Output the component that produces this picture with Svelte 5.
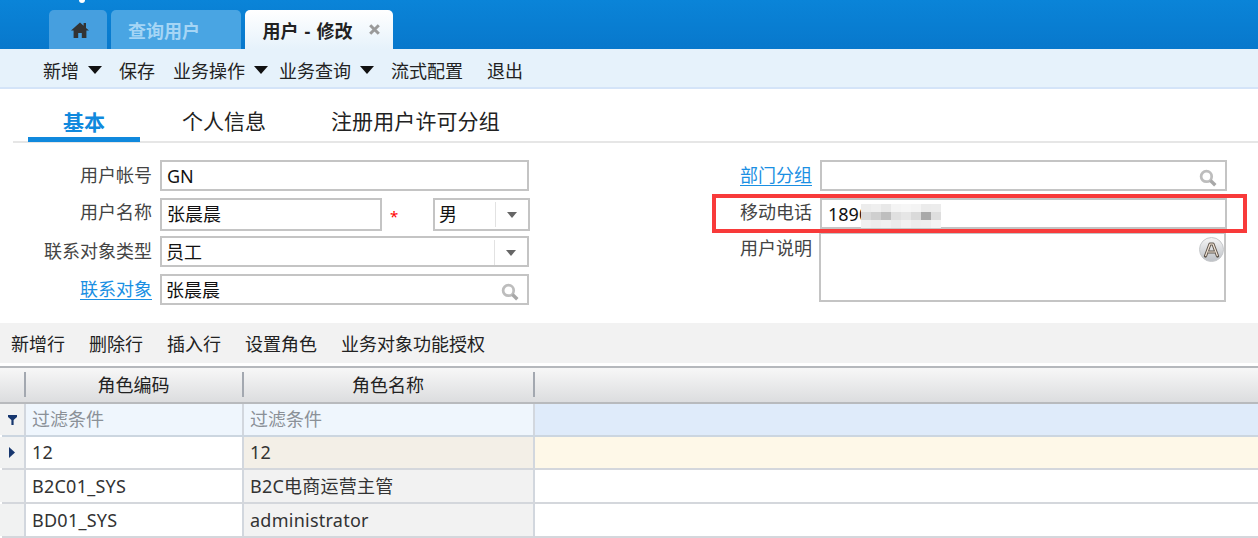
<script>
  const mosaic = [
    ['#ececec','#efefef','#e8e8e8','#f4f4f4','#f6f6f6','#f4f4f4','#ebebeb','#ececec'],
    ['#d9d9d9','#cfcfcf','#bebebe','#e0e0e0','#e6e6e6','#dadada','#a9a9a9','#dedede'],
    ['#f0f0f0','#ededed','#f0f0f0','#ebebeb','#f2f2f2','#ededed','#eeeeee','#f4f4f4']
  ];
  const rows = [
    { code: '12', name: '12', current: true },
    { code: 'B2C01_SYS', name: 'B2C电商运营主管' },
    { code: 'BD01_SYS', name: 'administrator' }
  ];
</script>

<div class="page">
  <header class="topbar">
    <span class="dot"></span>
    <div class="tab home">
      <svg width="18" height="16" viewBox="0 0 18 16"><path d="M9 .5 0 8.6h2.6V16h4.6v-5h3.6v5h4.6V8.6H18L15 5.9V1h-2.4v2.7z" fill="#333"/></svg>
    </div>
    <div class="tab inactive">查询用户</div>
    <div class="tab active">
      <span class="title">用户 - 修改</span>
      <svg class="close" width="11" height="11" viewBox="0 0 11 11"><path d="M1.2 1.2l8.6 8.6M9.8 1.2l-8.6 8.6" stroke="#9a9a9a" stroke-width="3"/></svg>
    </div>
  </header>

  <nav class="toolbar">
    <span class="tool">新增<i class="caret"></i></span>
    <span class="tool s">保存</span>
    <span class="tool b">业务操作<i class="caret"></i></span>
    <span class="tool c">业务查询<i class="caret"></i></span>
    <span class="tool d">流式配置</span>
    <span class="tool e">退出</span>
  </nav>

  <div class="subtabs">
    <span class="subtab on">基本</span>
    <span class="subtab two">个人信息</span>
    <span class="subtab three">注册用户许可分组</span>
  </div>

  <section class="form">
    <div class="col left">
      <div class="row r1"><span class="label">用户帐号</span><div class="field grow gn">GN</div></div>
      <div class="row r2">
        <span class="label">用户名称</span>
        <div class="field name">张晨晨</div>
        <span class="req">*</span>
        <div class="field sex"><span class="val">男</span><span class="drop"><i></i></span></div>
      </div>
      <div class="row r3"><span class="label">联系对象类型</span><div class="field grow"><span class="val">员工</span><span class="drop"><i></i></span></div></div>
      <div class="row r4">
        <a class="label link">联系对象</a>
        <div class="field grow"><span class="val">张晨晨</span>
          <svg class="search" width="18" height="18" viewBox="0 0 17 17"><circle cx="7" cy="7" r="5" fill="none" stroke="#bdbdbd" stroke-width="2.6"/><path d="m10.8 10.8 4.6 4.6" stroke="#a8a8a8" stroke-width="3.2"/></svg>
        </div>
      </div>
    </div>
    <div class="col right">
      <div class="row r1">
        <a class="label link">部门分组</a>
        <div class="field grow"><span class="val"></span>
          <svg class="search" width="18" height="18" viewBox="0 0 17 17"><circle cx="7" cy="7" r="5" fill="none" stroke="#bdbdbd" stroke-width="2.6"/><path d="m10.8 10.8 4.6 4.6" stroke="#a8a8a8" stroke-width="3.2"/></svg>
        </div>
      </div>
      <div class="row r2 phone">
        <span class="label">移动电话</span>
        <div class="field grow latin"><span class="val">1890</span>
          <div class="mosaic">
            {#each mosaic as line}
              {#each line as c}<span style="background:{c}"></span>{/each}
            {/each}
          </div>
        </div>
        <div class="redbox"></div>
      </div>
      <div class="row r3 note">
        <span class="label">用户说明</span>
        <div class="area">
          <svg class="abc" width="25" height="25" viewBox="0 0 25 25"><defs><linearGradient id="g" x1="0" y1="0" x2="0" y2="1"><stop offset="0" stop-color="#f6f6f6"/><stop offset="1" stop-color="#bcc0c6"/></linearGradient></defs><circle cx="12.5" cy="12.5" r="12" fill="url(#g)" stroke="#c6c8ca"/><path d="M6.5 19 11 7h3l4.500 12M9 15h7" fill="none" stroke="#5f564d" stroke-width="3.2" stroke-linejoin="round" stroke-linecap="round"/><path d="M6.500 19 11 7h3l4.500 12M9 15h7" fill="none" stroke="#f4e6d8" stroke-width="1.2" stroke-linejoin="round"/></svg>
        </div>
      </div>
    </div>
  </section>

  <div class="gridbar">
    <span>新增行</span><span>删除行</span><span>插入行</span><span>设置角色</span><span>业务对象功能授权</span>
  </div>

  <section class="grid">
    <div class="ghead">
      <div class="c0"></div>
      <div class="c1">角色编码</div>
      <div class="c2">角色名称</div>
      <div class="c3"></div>
    </div>
    <div class="gfilter">
      <div class="c0"><svg width="9" height="10" viewBox="0 0 9 10"><path d="M0 0h9v2L5.6 5v5H3.4V5L0 2z" fill="#17376f"/></svg></div>
      <div class="c1">过滤条件</div>
      <div class="c2">过滤条件</div>
      <div class="c3"></div>
    </div>
    {#each rows as r}
      <div class="grow-row" class:current={r.current}>
        <div class="c0">{#if r.current}<svg width="6" height="11" viewBox="0 0 6 11"><path d="M0 0l6 5.5L0 11z" fill="#17376f"/></svg>{/if}</div>
        <div class="c1">{r.code}</div>
        <div class="c2">{r.name}</div>
        <div class="c3"></div>
      </div>
    {/each}
  </section>
</div>

<style>
  :global(body) { margin: 0; background: #fff; }
  .page {
    width: 1258px; height: 538px; overflow: hidden;
    font-family: "Noto Sans", "Noto Sans CJK SC", sans-serif;
    font-size: 18px; color: #222;
  }
  .topbar {
    height: 49px; box-sizing: border-box; padding: 10px 0 0 49px;
    display: flex; gap: 4px; position: relative;
    background: linear-gradient(#0a84d8, #0878cc);
  }
  .dot { position: absolute; left: 79px; top: -3px; width: 6px; height: 6px; border-radius: 50%; background: #fff; }
  .tab {
    height: 39px; box-sizing: border-box; border-radius: 5px 5px 0 0;
    display: flex; align-items: center; justify-content: center;
    font-weight: 700; font-size: 18px;
  }
  .home { width: 58px; background: #469fdf; padding-left: 4px; }
  .inactive { width: 130px; background: #49a5e3; color: #a5d5f5; padding-right: 24px; }
  .active { width: 148px; background: linear-gradient(#fff, #e6f2fb); color: #222; gap: 16px; padding-left: 4px; white-space: pre; }
  .title { word-spacing: 1.5px; }

  .toolbar {
    height: 40px; box-sizing: border-box; display: flex; align-items: center;
    padding: 4px 0 0 43px; background: #e6f2fb; border-bottom: 2px solid #d4e4f8; color: #222;
    font-size: 18px;
  }
  .tool { display: inline-flex; align-items: center; white-space: nowrap; margin-right: 17px; }
  .tool.s { margin-right: 18px; }
  .tool.b { margin-right: 11px; }
  .tool.c { margin-right: 17px; }
  .tool.d { margin-right: 24px; }
  .caret {
    display: inline-block; margin-left: 9px;
    border: 7px solid transparent; border-top: 8px solid #111; border-bottom: 0;
  }

  .subtabs {
    margin: 0 0 0 13px; height: 54px; box-sizing: border-box; display: flex; align-items: flex-end;
    border-bottom: 2px solid #e6e6e6; font-size: 21px; padding-left: 15px;
  }
  .subtab { display: block; line-height: 34px; height: 37px; box-sizing: border-box; white-space: nowrap; }
  .subtab.on { width: 112px; text-align: center; color: #1089dd; font-weight: 700; border-bottom: 5px solid #1089dd; margin-bottom: -1px; }
  .subtab.two { margin-left: 42px; }
  .subtab.three { margin-left: 65px; letter-spacing: .1px; }

  .form { display: grid; grid-template-columns: 530px 514px; column-gap: 183px; padding: 17px 0 0 0; height: 180px; box-sizing: border-box; }
  .col { display: flex; flex-direction: column; }
  .row { display: flex; align-items: flex-start; position: relative; }
  .label { width: 152px; flex: none; text-align: right; color: #444; font-size: 18px; line-height: 31px; margin-right: 8px; white-space: nowrap; }
  .right .label { width: 99px; }
  .link { color: #1a8fe3; text-decoration: underline; text-underline-offset: 3px; }
  .field {
    height: 31px; box-sizing: border-box; border: 2px solid #c4c4c4; background: #fff;
    display: flex; align-items: center; color: #111; position: relative; line-height: 31px; padding-top: 2px;
  }
  .field.grow { flex: 1; padding-left: 4px; }
  .left .field.grow { margin-right: 1px; }
  .field.latin { padding-left: 6px; }
  .field.gn { padding-left: 5px; }
  .val { flex: 1; }
  .r1, .r2, .r3 { height: 38px; }
  .r4 { height: 31px; }
  .left .r2 .field { height: 33px; padding-top: 0; }
  .left .r2 .label { line-height: 28px; }
  .field.name { width: 222px; flex: none; padding-left: 5px; }
  .req { width: 51px; flex: none; color: #f00; padding-left: 8px; box-sizing: border-box; line-height: 36px; font-size: 15px; }
  .field.sex { width: 97px; flex: none; padding-left: 4px; }
  .drop { width: 32px; height: 25px; border-left: 1px solid #e2e2e2; display: flex; align-items: center; justify-content: center; flex: none; }
  .drop i { border: 5px solid transparent; border-top: 6px solid #666; border-bottom: 0; }
  .search { position: absolute; right: 8px; top: 7px; }

  .phone { height: 35px; }
  .note { height: 70px; }
  .mosaic {
    position: absolute; left: 39px; top: 4px; display: grid;
    grid-template-columns: repeat(8, 10px); grid-auto-rows: 8px;
  }
  .mosaic span { display: block; }
  .redbox { position: absolute; left: -1px; top: -4px; width: 535px; height: 39px; box-sizing: border-box; border: 4px solid #f83a3a; pointer-events: none; z-index: 2; }
  .phone .label { line-height: 28px; }
  .area { flex: 1; height: 69px; box-sizing: border-box; border: 2px solid #c4c4c4; border-width: 1px 2px 2px 2px; position: relative; margin: 0 1px 0 -1px; }
  .abc { position: absolute; right: 0; top: 3px; }

  .gridbar {
    height: 40px; box-sizing: border-box; background: #f2f2f2;
    display: flex; align-items: center; gap: 24px; padding-left: 11px; font-size: 18px; color: #222;
  }
  .grid { margin-top: 3px; border-top: 2px solid #b5b8bc; }
  .ghead, .gfilter, .grow-row { display: grid; grid-template-columns: 26px 218px 291px 1fr; position: relative; }
  .ghead { height: 36px; background: linear-gradient(#f7f7f7, #dcdddf); border-bottom: 2px solid #b8babd; text-align: center; font-size: 18px; line-height: 34px; box-sizing: border-box; }
  .ghead > div { position: relative; }
  .ghead .c1, .ghead .c2 { padding-right: 3px; box-sizing: border-box; }
  .ghead .c0::after, .ghead .c1::after, .ghead .c2::after {
    content: ""; position: absolute; right: 0; top: 4px; height: 25px; width: 2px; background: #a3a8b0;
  }
  .gfilter { height: 33px; line-height: 30px; background: #eff6fd; color: #8a9097; font-size: 18px; border-bottom: 2px solid #ccd6e0; box-sizing: border-box; }
  .gfilter .c0 { display: flex; align-items: center; justify-content: center; background: #f1f2f2; border-right: 2px solid #d2d7de; }
  .gfilter .c1, .gfilter .c2 { padding-left: 6px; border-right: 2px solid #d2d7de; }
  .gfilter .c3 { background: #dfebfa; }
  .grow-row { height: 34px; box-sizing: border-box; border-bottom: 2px solid #d4d7dc; line-height: 32px; color: #333; font-size: 18px; letter-spacing: .25px; }
  .grow-row.current { height: 33px; line-height: 31px; }
  .gfilter::before, .grow-row::before {
    content: ""; position: absolute; left: 0; bottom: -2px; width: 2px; height: 2px; background: #fff;
  }
  .grow-row .c0 { background: #f1f2f2; display: flex; align-items: center; justify-content: center; border-right: 2px solid #d2d7de; }
  .grow-row .c1 { padding-left: 6px; background: #fff; border-right: 2px solid #d2d7de; }
  .grow-row .c2 { padding-left: 6px; background: #f2f2f2; border-right: 2px solid #d2d7de; }
  .current .c2 { background: #f3efe7; }
  .current .c3 { background: #fef8e8; }
</style>
